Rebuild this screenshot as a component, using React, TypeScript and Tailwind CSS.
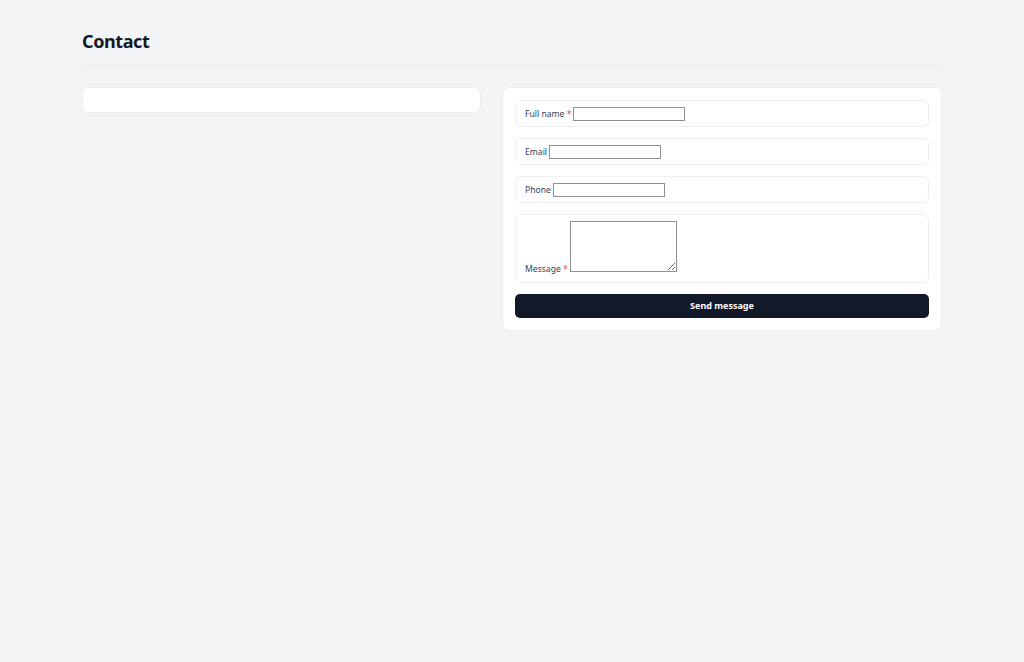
export default function App() {
  return (
    <div className="min-h-[662px] bg-[#f3f4f6] font-['Noto_Sans','Open_Sans',sans-serif] text-[#111827]">
      <div className="mx-auto w-[860px] pt-[29px]">
        <h1 className="border-b border-[#e9eaed] pb-[12px] text-[18px] font-bold leading-[24px] tracking-[-0.4px]">
          Contact
        </h1>
        <div className="mt-[21px] grid grid-cols-[399px_1fr] items-start gap-[21px]">
          <div className="h-[26px] rounded-[7px] border border-[#ebecef] bg-white" />
          <form
            className="flex flex-col gap-[11px] rounded-[7px] border border-[#ebecef] bg-white p-[12px]"
            onSubmit={(e) => e.preventDefault()}
          >
            <label className="flex h-[27px] items-center gap-[2px] rounded-[6px] border border-[#eeeff1] px-[9px] pt-px text-[8.6px] text-[#374151]">
              <span>
                Full name <span className="text-[#ef4444]">*</span>
              </span>
              <input className="h-[14px] w-[112px] border border-[#8f8f8f]" />
            </label>
            <label className="flex h-[27px] items-center gap-[2px] rounded-[6px] border border-[#eeeff1] px-[9px] pt-px text-[8.6px] text-[#374151]">
              <span>Email</span>
              <input className="h-[14px] w-[112px] border border-[#8f8f8f]" />
            </label>
            <label className="flex h-[27px] items-center gap-[2px] rounded-[6px] border border-[#eeeff1] px-[9px] pt-px text-[8.6px] text-[#374151]">
              <span>Phone</span>
              <input className="h-[14px] w-[112px] border border-[#8f8f8f]" />
            </label>
            <label className="flex h-[69px] items-start gap-[2px] rounded-[6px] border border-[#eeeff1] px-[9px] pt-[6px] text-[8.6px] text-[#374151]">
              <span className="mt-[42px]">
                Message <span className="text-[#ef4444]">*</span>
              </span>
              <textarea className="h-[51px] w-[107px] border border-[#8f8f8f]" />
            </label>
            <button
              type="submit"
              className="h-[24px] rounded-[5px] bg-[#111827] text-[9px] font-bold text-white"
            >
              Send message
            </button>
          </form>
        </div>
      </div>
    </div>
  );
}
